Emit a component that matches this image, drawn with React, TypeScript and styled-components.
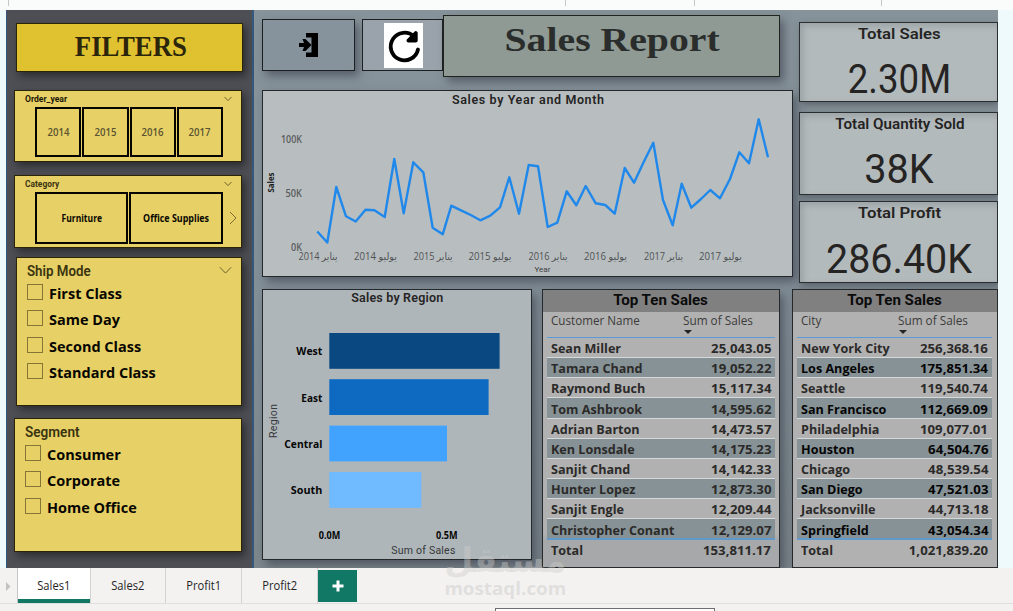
import React from 'react';
import styled, { createGlobalStyle, css } from 'styled-components';

const GlobalStyle = createGlobalStyle`
  * { box-sizing: border-box; }
  body { margin: 0; background: #f3f2f1; }
`;

const din = '"Roboto", "Liberation Sans", sans-serif';
const segoe = '"Open Sans", "Noto Sans", "DejaVu Sans", sans-serif';

const Page = styled.div`
  position: relative;
  width: 1013px;
  height: 611px;
  overflow: hidden;
  display: flex;
  flex-direction: column;
  font-family: ${segoe};
  color: #252423;
`;

const Ruler = styled.div`
  height: 10px;
  flex: none;
  display: flex;
  background: #fafbfb;
`;
const RulerCell = styled.div<{ $w: number }>`
  width: ${p => p.$w}px;
  height: 6px;
  border-right: 1px solid #c4c6c8;
`;

const Stage = styled.main`
  display: flex;
  flex: none;
  height: 558px;
  padding-left: 6px;
  background: #effafd;
`;

const Label = styled.span<{ $size: number; $weight?: number; $sx?: number; $font?: string; $color?: string; $origin?: string; $lh?: number }>`
  display: block;
  white-space: nowrap;
  font-family: ${p => p.$font ?? segoe};
  font-size: ${p => p.$size}px;
  font-weight: ${p => p.$weight ?? 400};
  line-height: ${p => (p.$lh ? `${p.$lh}px` : '1')};
  color: ${p => p.$color ?? '#252423'};
  transform: scaleX(${p => p.$sx ?? 1});
  transform-origin: ${p => p.$origin ?? 'center'};
`;

/* Filters */
const Sidebar = styled.aside`
  width: 248px;
  height: 558px;
  flex: none;
  padding: 13px 0 0 7px;
  border: solid #35587c;
  border-width: 0 2px 0 1px;
  background: #4e4f55;
`;
const Card = styled.section<{ $h: number; $mt: number; $inset?: number }>`
  width: ${p => 228 - (p.$inset ?? 0)}px;
  height: ${p => p.$h}px;
  margin: ${p => p.$mt}px 0 0 ${p => p.$inset ?? 0}px;
  border: 1px solid #2a2509;
  background: #e7d167;
  box-shadow: 3px 4px 8px rgba(0, 0, 0, 0.45);
`;
const Heading = styled(Card)`
  width: 227px;
  margin: 0 0 0 2px;
  padding: 0 0 4px 2px;
  display: flex;
  align-items: center;
  justify-content: center;
  background: #e0c12f;
`;
const CardTop = styled.div<{ $h: number; $pl: number; $pr: number }>`
  display: flex;
  align-items: center;
  justify-content: space-between;
  height: ${p => p.$h}px;
  padding: 0 ${p => p.$pr}px 0 ${p => p.$pl}px;
`;
const TileRow = styled.div`
  display: flex;
  align-items: center;
  gap: 1px;
  padding-left: 20px;
`;
const Tile = styled.div<{ $w: number; $h: number }>`
  width: ${p => p.$w}px;
  height: ${p => p.$h}px;
  display: flex;
  align-items: center;
  justify-content: center;
  border: 2px solid #060500;
`;
const NextArrow = styled.div`
  margin-left: 5px;
  height: 14px;
  svg { display: block; }
`;
const Options = styled.div`
  padding: 1px 0 0 10px;
`;
const Option = styled.div`
  display: flex;
  align-items: flex-start;
  gap: 5.5px;
  height: 26.3px;
`;
const Check = styled.i`
  width: 16px;
  height: 16px;
  flex: none;
  border: 1px solid #857638;
`;

/* Report canvas */
const Canvas = styled.div`
  width: 744px;
  height: 558px;
  flex: none;
  padding: 5px 0 0 8px;
  overflow: hidden;
  background: linear-gradient(180deg, #87939a 0%, #84919a 40%, #7c878c 100%);
`;
const TopArea = styled.div`
  display: flex;
  height: 274px;
`;
const TopLeft = styled.div`
  width: 531px;
  flex: none;
`;
const Toolbar = styled.div`
  display: flex;
  height: 75px;
`;
const shadow = css`box-shadow: 4px 5px 9px rgba(40, 42, 58, 0.5);`;
const ToolButton = styled.div<{ $w: number; $bg: string; $mr: number; $raised?: boolean }>`
  width: ${p => p.$w}px;
  height: 52px;
  margin: 4px ${p => p.$mr}px 0 0;
  display: flex;
  align-items: center;
  justify-content: center;
  border: 1px solid #1d2023;
  background: ${p => p.$bg};
  ${p => p.$raised && shadow}
`;
const IconPlate = styled.div`
  width: 39px;
  height: 45px;
  margin-left: 2px;
  background: #fff;
  display: flex;
`;
const Title = styled.h1`
  width: 337px;
  height: 62px;
  margin: 0;
  padding: 6px 0 0 2px;
  border: 1px solid #20241f;
  background: #8e9a93;
  display: flex;
  justify-content: center;
  ${shadow}
`;
const Panel = styled.section<{ $w: number; $h: number; $bg: string }>`
  width: ${p => p.$w}px;
  height: ${p => p.$h}px;
  flex: none;
  border: 1px solid #26292b;
  background: ${p => p.$bg};
  ${shadow}
  svg { display: block; }
`;
const Kpis = styled.div`
  width: 199px;
  margin-left: 6px;
  padding-top: 7px;
`;
const Kpi = styled.section<{ $h: number; $mb: number }>`
  height: ${p => p.$h}px;
  margin-bottom: ${p => p.$mb}px;
  padding: 0 0 0 2px;
  display: flex;
  flex-direction: column;
  align-items: center;
  border: 1px solid #2b2e30;
  background: #b3babc;
  box-shadow: inset 3px 3px 6px rgba(110, 118, 124, 0.35), 2px 3px 7px rgba(40, 42, 50, 0.45);
`;
const BottomArea = styled.div`
  display: flex;
  align-items: flex-start;
`;

/* Tables */
const TablePanel = styled(Panel)<{ $ml: number }>`
  margin-left: ${p => p.$ml}px;
`;
const TableTitle = styled.div`
  height: 22px;
  display: flex;
  align-items: center;
  justify-content: center;
  background: #808080;
`;
const Grid = styled.div<{ $pr: number }>`
  padding: 0 ${p => p.$pr}px 0 4px;
`;
const HeadRow = styled.div<{ $split: number }>`
  display: grid;
  grid-template-columns: ${p => p.$split}px 1fr;
  height: 26px;
  padding: 1px 0 0 4px;
  border-bottom: 1px solid #5b9bd5;
`;
const SortMark = styled.i`
  display: block;
  margin: 2px 0 0 1px;
  width: 0;
  border: solid transparent;
  border-width: 4px 4px 0;
  border-top-color: #252423;
`;
const Row = styled.div<{ $alt?: boolean; $last?: boolean }>`
  display: flex;
  justify-content: space-between;
  align-items: center;
  height: 20.17px;
  padding: ${p => (p.$last ? 3 : 1)}px 4px 0 4px;
  border-bottom: ${p => (p.$last ? '2px solid #6099cc' : '1px solid #d6d9da')};
  background: ${p => (p.$alt ? '#869296' : 'transparent')};
`;
const Total = styled(Row)`
  border: 0;
  height: 20px;
`;

/* Page tabs */
const Tabs = styled.nav`
  display: flex;
  flex: none;
  height: 36px;
  background: #f3f2f1;
  border-bottom: 1px solid #e1dfdd;
`;
const TabArrow = styled.div`
  width: 17px;
  padding: 14px 0 0 5px;
  svg { display: block; }
`;
const Tab = styled.div<{ $w: number; $active?: boolean }>`
  width: ${p => p.$w}px;
  height: 35px;
  display: flex;
  align-items: center;
  justify-content: center;
  border-right: 1px solid #d4d2d0;
  ${p => p.$active && css`
    background: #fff;
    border-left: 1px solid #c8c6c4;
    box-shadow: inset 0 -4px #117865;
  `}
`;
const AddTab = styled.div`
  width: 39px;
  height: 32px;
  margin-top: 2px;
  display: flex;
  align-items: center;
  justify-content: center;
  background: #117865;
`;
const Status = styled.footer`
  flex: 1;
  padding: 4px 0 0 495px;
`;
const StatusBox = styled.div`
  width: 220px;
  height: 8px;
  border: 1px solid #6e6e6e;
  background: #fff;
`;

const Watermark = styled.div`
  position: absolute;
  left: 444px;
  top: 541px;
  width: 123px;
  display: flex;
  flex-direction: column;
  align-items: center;
  pointer-events: none;
`;

const Chevron = ({ size }: { size: number }) => (
  <svg width={size} height={size} viewBox="0 0 12 12" fill="none" stroke="#6f622c" strokeWidth={12 / size}>
    <path d="M0.8 3 6 8.4l5.2-5.4" />
  </svg>
);

const points: [number, number][] = [
  [317.3, 231.5], [327.3, 242.5], [336.3, 187], [346, 216.3], [355.7, 221.5], [365.5, 209.7], [374.5, 210.3],
  [384.7, 217], [394.3, 159], [403.7, 213.3], [413.3, 162.3], [423.3, 172.3], [432.7, 227.7], [442.7, 234.3],
  [451.3, 205.7], [461, 210.3], [470.7, 215], [480.3, 220.3], [490.3, 215.7], [500, 207.3], [509.3, 177.3],
  [519, 213.7], [528.7, 165], [538, 166.3], [547.7, 227], [557.3, 222.7], [566.7, 191.3], [576.3, 205.3],
  [585.7, 186], [595.7, 203.3], [605.3, 205], [614.7, 213.7], [624.7, 168], [634, 182.7], [643.7, 162],
  [653.3, 142.7], [663, 200], [672.7, 225.3], [681.7, 183.7], [691.3, 207.7], [701, 199], [710.3, 190],
  [720, 198.3], [730, 179], [739.3, 152.3], [749, 163.3], [758.7, 119.3], [768, 157.3],
];
const months: [string, number, number][] = [
  ['يناير 2014', 318, 39], ['يوليو 2014', 375.5, 43], ['يناير 2015', 433, 39], ['يوليو 2015', 490, 43],
  ['يناير 2016', 548, 39], ['يوليو 2016', 605.5, 43], ['يناير 2017', 663.5, 39], ['يوليو 2017', 720.5, 43],
];

const LineChart = () => (
  <svg width="529" height="185" viewBox="263 91 529 185">
    <text x="528" y="104" textAnchor="middle" fontFamily="Roboto, sans-serif" fontWeight="600" fontSize="12.5" fill="#252423" textLength="152">Sales by Year and Month</text>
    <g fontFamily="Open Sans, sans-serif" fontSize="10" fontWeight="600" fill="#5a5c5e" textAnchor="end">
      <text x="302" y="143" textLength="21" lengthAdjust="spacingAndGlyphs">100K</text>
      <text x="302" y="197" textLength="16.5" lengthAdjust="spacingAndGlyphs">50K</text>
      <text x="302" y="251" textLength="11" lengthAdjust="spacingAndGlyphs">0K</text>
    </g>
    <g fontFamily="Open Sans, DejaVu Sans, sans-serif" fontSize="10" fontWeight="500" fill="#505254" textAnchor="middle">
      {months.map(([t, x, w]) => (
        <text key={t} x={x} y="260" textLength={w} lengthAdjust="spacingAndGlyphs">{t}</text>
      ))}
    </g>
    <text x="542.5" y="272" textAnchor="middle" fontFamily="Roboto, sans-serif" fontSize="8" fill="#3c3d3e">Year</text>
    <text transform="translate(274 182.5) rotate(-90)" textAnchor="middle" fontFamily="Open Sans, sans-serif" fontSize="8" fontWeight="700" fill="#1c1c1c" textLength="20" lengthAdjust="spacingAndGlyphs">Sales</text>
    <polyline points={points.map(p => p.join(',')).join(' ')} fill="none" stroke="#1f88ea" strokeWidth="2.4" strokeLinejoin="round" />
  </svg>
);

const regions = [
  { name: 'West', y: 333, w: 170.3, fill: '#0a4881', tw: 26 },
  { name: 'East', y: 379.2, w: 159.3, fill: '#0e6ac0', tw: 21 },
  { name: 'Central', y: 425.6, w: 117.7, fill: '#42a3ff', tw: 38 },
  { name: 'South', y: 472, w: 92, fill: '#70baff', tw: 31.5 },
];

const RegionChart = () => (
  <svg width="268" height="269" viewBox="263 290 268 269">
    <text x="397.2" y="302" textAnchor="middle" fontFamily="Roboto, sans-serif" fontWeight="600" fontSize="12.5" fill="#252423" textLength="92">Sales by Region</text>
    {regions.map(r => (
      <g key={r.name}>
        <rect x="329.3" y={r.y} width={r.w} height="35.8" fill={r.fill} />
        <text x="322.3" y={r.y + 22.4} textAnchor="end" fontFamily="Open Sans, sans-serif" fontWeight="700" fontSize="11" fill="#060606" textLength={r.tw} lengthAdjust="spacingAndGlyphs">{r.name}</text>
      </g>
    ))}
    <g fontFamily="Open Sans, sans-serif" fontWeight="700" fontSize="10" fill="#060606" textAnchor="middle">
      <text x="329.6" y="539" textLength="21.5" lengthAdjust="spacingAndGlyphs">0.0M</text>
      <text x="446.8" y="539" textLength="21.5" lengthAdjust="spacingAndGlyphs">0.5M</text>
    </g>
    <text x="423.3" y="554" textAnchor="middle" fontFamily="Roboto, sans-serif" fontSize="10.5" fill="#36383a" textLength="64">Sum of Sales</text>
    <text transform="translate(277 421) rotate(-90)" textAnchor="middle" fontFamily="Roboto, sans-serif" fontSize="10.5" fill="#36383a" textLength="34">Region</text>
  </svg>
);

const customers = [
  ['Sean Miller', '25,043.05'], ['Tamara Chand', '19,052.22'], ['Raymond Buch', '15,117.34'], ['Tom Ashbrook', '14,595.62'],
  ['Adrian Barton', '14,473.57'], ['Ken Lonsdale', '14,175.23'], ['Sanjit Chand', '14,142.33'], ['Hunter Lopez', '12,873.30'],
  ['Sanjit Engle', '12,209.44'], ['Christopher Conant', '12,129.07'],
];
const cities = [
  ['New York City', '256,368.16'], ['Los Angeles', '175,851.34'], ['Seattle', '119,540.74'], ['San Francisco', '112,669.09'],
  ['Philadelphia', '109,077.01'], ['Houston', '64,504.76'], ['Chicago', '48,539.54'], ['San Diego', '47,521.03'],
  ['Jacksonville', '44,713.18'], ['Springfield', '43,054.34'],
];

const Cell = ({ end, ink = '#2b2a29', children }: { end?: boolean; ink?: string; children: React.ReactNode }) => (
  <Label $size={13} $weight={700} $sx={end ? 1.015 : 0.968} $origin={end ? 'right' : 'left'} $color={ink} $lh={18}>{children}</Label>
);

type TopTenProps = { column: string; rows: string[][]; total: string; width: number; ml: number; split: number; pr: number; dark?: boolean };

const TopTen = ({ column, rows, total, width, ml, split, pr, dark }: TopTenProps) => (
  <TablePanel $w={width} $h={279} $bg={dark ? '#b1b1b1' : 'linear-gradient(#b1b1b1 88%, #a6a8a9 90%)'} $ml={ml}>
    <TableTitle>
      <Label $size={14.5} $weight={700} $font={din} $color="#0b0b0b" $sx={1.04}>Top Ten Sales</Label>
    </TableTitle>
    <Grid $pr={pr}>
      <HeadRow $split={split}>
        <Label $size={12} $lh={15} $sx={0.97} $origin="left" $color="#3c3b3a">{column}</Label>
        <div>
          <Label $size={12} $lh={15} $sx={0.98} $origin="left" $color="#3c3b3a">Sum of Sales</Label>
          <SortMark />
        </div>
      </HeadRow>
      {rows.map(([name, value], i) => {
        const alt = i % 2 === 1;
        const ink = dark && alt ? '#050505' : undefined;
        return (
          <Row key={name} $alt={alt} $last={i === rows.length - 1}>
            <Cell ink={ink}>{name}</Cell>
            <Cell ink={ink} end>{value}</Cell>
          </Row>
        );
      })}
      <Total>
        <Cell>Total</Cell>
        <Cell end>{total}</Cell>
      </Total>
    </Grid>
  </TablePanel>
);

const CheckList = ({ items }: { items: string[] }) => (
  <Options>
    {items.map(t => (
      <Option key={t}>
        <Check />
        <Label $size={15} $weight={700} $sx={0.965} $origin="left" $lh={18} $color="#070600">{t}</Label>
      </Option>
    ))}
  </Options>
);

export default function App() {
  return (
    <Page>
      <GlobalStyle />
      <Ruler>
        {[9, 557, 129, 187].map((w, i) => <RulerCell key={i} $w={w} />)}
      </Ruler>
      <Stage>
        <Sidebar>
          <Heading as="header" $h={49} $mt={0}>
            <Label $size={30} $weight={700} $font={'"Liberation Serif", serif'} $sx={0.892} $color="#2b260b">FILTERS</Label>
          </Heading>
          <Card $h={72} $mt={18}>
            <CardTop $h={16} $pl={10} $pr={9}>
              <Label $size={9} $weight={700} $font={din} $sx={0.953} $origin="left" $color="#1d1a06">Order_year</Label>
              <Chevron size={8} />
            </CardTop>
            <TileRow>
              {['2014', '2015', '2016', '2017'].map(y => (
                <Tile key={y} $w={46.25} $h={50}>
                  <Label $size={10} $weight={600} $sx={0.96} $color="#5a5230">{y}</Label>
                </Tile>
              ))}
            </TileRow>
          </Card>
          <Card $h={73} $mt={13}>
            <CardTop $h={16} $pl={10} $pr={9}>
              <Label $size={9} $weight={700} $font={din} $sx={0.934} $origin="left" $color="#3a340f">Category</Label>
              <Chevron size={8} />
            </CardTop>
            <TileRow>
              <Tile $w={93} $h={52}><Label $size={10} $weight={700} $sx={0.85} $color="#070600">Furniture</Label></Tile>
              <Tile $w={93.5} $h={52}><Label $size={10} $weight={700} $sx={0.89} $color="#070600">Office Supplies</Label></Tile>
              <NextArrow>
                <svg width="8" height="14" viewBox="0 0 8 14" fill="none" stroke="#7d6f33"><path d="M1 1l6 6-6 6" /></svg>
              </NextArrow>
            </TileRow>
          </Card>
          <Card $h={149} $mt={9} $inset={2}>
            <CardTop $h={25} $pl={10} $pr={9}>
              <Label $size={14} $weight={600} $font={din} $sx={0.95} $origin="left" $color="#3a340f">Ship Mode</Label>
              <Chevron size={13} />
            </CardTop>
            <CheckList items={['First Class', 'Same Day', 'Second Class', 'Standard Class']} />
          </Card>
          <Card $h={134} $mt={12}>
            <CardTop $h={25} $pl={10} $pr={9}>
              <Label $size={14} $weight={600} $font={din} $sx={0.97} $origin="left" $color="#3a340f">Segment</Label>
            </CardTop>
            <CheckList items={['Consumer', 'Corporate', 'Home Office']} />
          </Card>
        </Sidebar>
        <Canvas>
          <TopArea>
            <TopLeft>
              <Toolbar>
                <ToolButton $w={93} $bg="#87939c" $mr={7} $raised>
                  <svg width="20" height="24" viewBox="0 0 20 24" fill="#000">
                    <path d="M7 0h12v24H7v-4.500h5.500v-15H7z" />
                    <path d="M0 10h5L3.500 6H6.500l6 6-6 6H3.500L5 14H0z" />
                  </svg>
                </ToolButton>
                <ToolButton $w={81} $bg="#9aa3ab" $mr={0}>
                  <IconPlate>
                    <svg width="39" height="45" viewBox="0 0 39 45" fill="none" stroke="#000" strokeWidth="3.800" strokeLinecap="round" strokeLinejoin="round">
                      <path d="M34 26.500a13.800 13.800 0 1 1-4-13" />
                      <path d="M31.800 10v7.600h-7.400z" fill="#000" />
                    </svg>
                  </IconPlate>
                </ToolButton>
                <Title>
                  <Label $size={34} $weight={700} $font={'"Liberation Serif", serif'} $sx={1.168} $lh={36} $color="#2a2d2b">Sales Report</Label>
                </Title>
              </Toolbar>
              <Panel $w={531} $h={187} $bg="#b8bec0"><LineChart /></Panel>
            </TopLeft>
            <Kpis>
              <Kpi $h={80} $mb={10}>
                <Label $size={15.5} $weight={600} $font={din} $sx={1.08} $lh={22}>Total Sales</Label>
                <Label $size={40} $font={din} $sx={0.915} $lh={70}>2.30M</Label>
              </Kpi>
              <Kpi $h={83} $mb={6}>
                <Label $size={15.5} $weight={600} $font={din} $sx={0.98} $lh={22}>Total Quantity Sold</Label>
                <Label $size={40} $font={din} $sx={0.99} $lh={69}>38K</Label>
              </Kpi>
              <Kpi $h={82} $mb={0}>
                <Label $size={15.5} $weight={600} $font={din} $sx={1.08} $lh={22}>Total Profit</Label>
                <Label $size={40} $font={din} $sx={0.986} $lh={71}>286.40K</Label>
              </Kpi>
            </Kpis>
          </TopArea>
          <BottomArea>
            <Panel $w={270} $h={271} $bg="#afb6ba"><RegionChart /></Panel>
            <TopTen column="Customer Name" rows={customers} total="153,811.17" width={238} ml={10} split={132} pr={4} />
            <TopTen column="City" rows={cities} total="1,021,839.20" width={206} ml={12} split={97} pr={5} dark />
          </BottomArea>
        </Canvas>
      </Stage>
      <Tabs>
        <TabArrow>
          <svg width="6" height="9" viewBox="0 0 6 9" fill="#c4c2c0"><path d="M1 0l4.500 4.500L1 9z" /></svg>
        </TabArrow>
        <Tab $w={74} $active><Label $size={12} $sx={0.93}>Sales1</Label></Tab>
        <Tab $w={75}><Label $size={12} $sx={0.93}>Sales2</Label></Tab>
        <Tab $w={76}><Label $size={12} $sx={0.93}>Profit1</Label></Tab>
        <Tab $w={76}><Label $size={12} $sx={0.93}>Profit2</Label></Tab>
        <AddTab>
          <svg width="12" height="12" viewBox="0 0 12 12" stroke="#fff" strokeWidth="3"><path d="M6 0.500v11M0.500 6h11" /></svg>
        </AddTab>
      </Tabs>
      <Status><StatusBox /></Status>
      <Watermark>
        <Label $size={34} $weight={700} $font={'"DejaVu Sans", sans-serif'} $sx={0.98} $lh={38} $color="rgba(205,205,203,0.42)">مستقل</Label>
        <Label $size={18} $weight={700} $sx={1.045} $lh={18} $color="rgba(205,205,203,0.5)">mostaql.com</Label>
      </Watermark>
    </Page>
  );
}
